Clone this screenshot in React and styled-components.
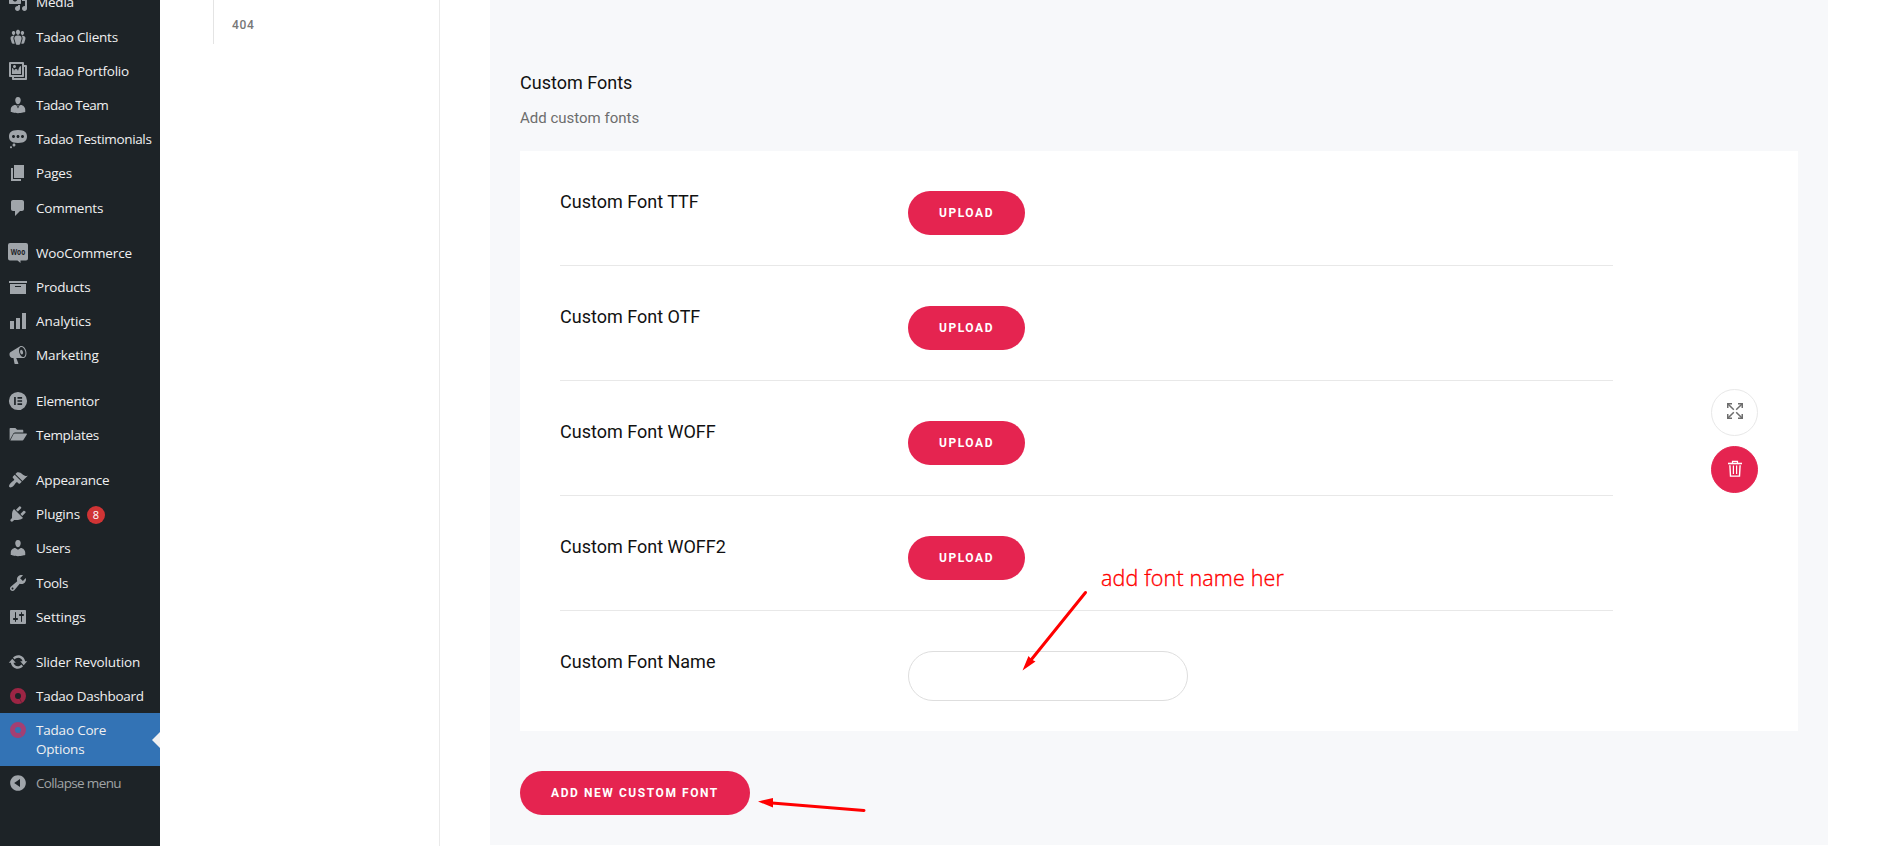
import styled, { createGlobalStyle } from "styled-components";

const GlobalStyle = createGlobalStyle`
    * {
        box-sizing: border-box;
    }
    body {
        margin: 0;
        background: #fff;
        overflow: hidden;
    }
`;

const Page = styled.div`
    position: relative;
    display: flex;
    width: 1877px;
    height: 846px;
    overflow: hidden;
    font-family: Roboto, "Liberation Sans", sans-serif;
`;

/* ---------- admin menu ---------- */

const Sidebar = styled.nav`
    flex: none;
    width: 160px;
    height: 846px;
    background: #1d2327;
    font-family: "Open Sans", "Noto Sans", sans-serif;
    overflow: hidden;
`;

const MenuList = styled.ul`
    list-style: none;
    margin: -14.7px 0 0;
    padding: 0;
`;

const MenuSeparator = styled.li`
    height: 11px;
`;

const MenuItem = styled.li`
    position: relative;
    display: flex;
    align-items: flex-start;
    min-height: 34.2px;
    background: ${({ $active }) => ($active ? "#3373b5" : "transparent")};
    color: ${({ $muted }) => ($muted ? "#a0a3a6" : "#f0f0f1")};
`;

const MenuIcon = styled.span`
    flex: none;
    display: flex;
    justify-content: center;
    width: 36px;
    padding-top: 7px;
    color: #a0a5aa;
    svg {
        display: block;
        width: 20px;
        height: 20px;
        fill: currentColor;
    }
`;

const MenuText = styled.span`
    display: flex;
    align-items: center;
    padding: 8px 0;
    font-size: 13.5px;
    line-height: 18.2px;
    letter-spacing: ${({ $spacing }) => $spacing || "-0.2px"};
    white-space: pre;
`;

const CountBadge = styled.span`
    width: 18px;
    height: 18px;
    margin: 1px 0 -1px 7px;
    border-radius: 9px;
    background: #d03435;
    color: #fff;
    font-size: 11px;
    line-height: 18px;
    letter-spacing: 0;
    text-align: center;
`;

const ActiveNotch = styled.span`
    position: absolute;
    right: 0;
    top: 50%;
    margin-top: -8px;
    border: 8px solid transparent;
    border-left-width: 0;
    border-right-color: #f0f0f1;
`;

/* ---------- theme options ---------- */

const SubNav = styled.aside`
    flex: none;
    width: 280px;
    padding-left: 53px;
    border-right: 1px solid #eaeaea;
`;

const SubNavItem = styled.div`
    height: 44px;
    padding: 17px 0 0 18px;
    border-left: 1px solid #e4e4e4;
    color: #777;
    font-size: 12px;
    font-weight: 500;
    line-height: 16px;
    letter-spacing: 0.7px;
`;

const Panel = styled.main`
    width: 1338px;
    height: 845px;
    margin-left: 50px;
    padding: 70px 30px 0;
    background: #f7f8fa;
`;

const PanelTitle = styled.h3`
    margin: 0;
    color: #111;
    font-size: 18px;
    font-weight: 400;
    line-height: 26px;
`;

const PanelHint = styled.p`
    margin: 10px 0 21px;
    color: #6d6d6d;
    font-size: 15px;
    line-height: 24px;
`;

const Card = styled.section`
    display: flex;
    align-items: center;
    justify-content: space-between;
    height: 580px;
    padding: 0 40px;
    background: #fff;
`;

const Fields = styled.div`
    width: 1053px;
`;

const Field = styled.div`
    display: flex;
    align-items: flex-start;
    height: 115px;
    padding-top: 40px;
    border-bottom: 1px solid #e8e8e8;
    &:last-child {
        height: 120px;
        border-bottom: none;
    }
`;

const FieldLabel = styled.label`
    width: 348px;
    color: #111;
    font-size: 18px;
    line-height: 22px;
`;

const Button = styled.button`
    display: block;
    width: ${({ $width }) => $width};
    height: 44px;
    margin: ${({ $top }) => $top || 0} 0 0;
    padding: 0;
    border: none;
    border-radius: 22px;
    background: #e52450;
    color: #fff;
    font-family: inherit;
    font-size: 12px;
    font-weight: 700;
    letter-spacing: 1.56px;
    line-height: 44px;
    text-align: center;
    text-transform: uppercase;
`;

const TextInput = styled.input`
    width: 280px;
    height: 50px;
    padding: 0 25px;
    border: 1px solid #dedede;
    border-radius: 25px;
    background: #fff;
    outline: none;
`;

const Actions = styled.div`
    display: flex;
    flex-direction: column;
    gap: 10px;
`;

const RoundButton = styled.button`
    display: flex;
    align-items: center;
    justify-content: center;
    width: 47px;
    height: 47px;
    padding: 0;
    border: 1px solid ${({ $filled }) => ($filled ? "#e52450" : "#e8e8e8")};
    border-radius: 50%;
    background: ${({ $filled }) => ($filled ? "#e52450" : "#fff")};
    color: ${({ $filled }) => ($filled ? "#fff" : "#6d6d6d")};
    svg {
        display: block;
        margin: ${({ $filled }) => ($filled ? "-1px 0 0 1px" : "-3px 0 0 1px")};
    }
`;

/* ---------- annotations over the page ---------- */

const Arrows = styled.svg`
    position: absolute;
    left: 0;
    top: 0;
    pointer-events: none;
`;

const Note = styled.span`
    position: absolute;
    left: 1101px;
    top: 563px;
    color: #f00;
    font-family: "Open Sans", sans-serif;
    font-size: 21.5px;
    font-weight: 300;
    line-height: 30px;
    letter-spacing: 0.15px;
    white-space: nowrap;
    -webkit-text-stroke: 0.35px #f00;
`;

const paths = {
    media: "M13 11V4c0-.55-.45-1-1-1h-1.67L9 1H5L3.67 3H2c-.55 0-1 .45-1 1v7c0 .55.45 1 1 1h10c.55 0 1-.45 1-1zM7 4.5c1.38 0 2.5 1.12 2.5 2.5S8.38 9.5 7 9.5 4.5 8.38 4.5 7 5.62 4.5 7 4.5zM14 6h5v10.5c0 1.38-1.12 2.5-2.5 2.5S14 17.88 14 16.5s1.12-2.5 2.5-2.5c.17 0 .34.02.5.05V9h-3V6zm-4 8.05V13h2v3.5c0 1.38-1.12 2.5-2.5 2.5S7 17.88 7 16.5 8.12 14 9.5 14c.17 0 .34.02.5.05z",
    groups: "M8.03 4.46c-.29 1.28.55 3.46 1.97 3.46 1.41 0 2.25-2.18 1.96-3.46-.22-.98-1.08-1.63-1.96-1.63-.89 0-1.74.65-1.97 1.63zm-4.13.9c-.25 1.08.47 2.93 1.67 2.93s1.92-1.85 1.67-2.93c-.19-.83-.92-1.39-1.67-1.39s-1.48.56-1.67 1.39zm8.86 0c-.25 1.08.47 2.93 1.66 2.93 1.2 0 1.92-1.85 1.67-2.93-.19-.83-.92-1.39-1.67-1.39-.74 0-1.47.56-1.66 1.39zm-.59 11.43l1.25-4.3C14.2 10 12.71 8.47 10 8.47c-2.72 0-4.21 1.53-3.44 4.02l1.26 4.3C8.05 17.51 9 18 10 18c.98 0 1.94-.49 2.17-1.21zm-6.1-7.63c-.49.67-.96 1.83-.42 3.59l1.12 3.79c-.34.2-.77.31-1.2.31-.85 0-1.65-.41-1.85-1.03l-1.07-3.65c-.65-2.11.61-3.4 2.92-3.4.27 0 .54.02.79.06-.1.1-.2.22-.29.33zm8.35-.39c2.31 0 3.58 1.29 2.92 3.4l-1.07 3.65c-.2.62-1 1.03-1.85 1.03-.43 0-.86-.11-1.2-.31l1.11-3.77c.55-1.78.08-2.94-.42-3.61-.08-.11-.18-.23-.28-.33.25-.04.51-.06.79-.06z",
    gallery: "M16 4h1.96c.57 0 1.04.47 1.04 1.04v12.92c0 .57-.47 1.04-1.04 1.04H5.04C4.47 19 4 18.53 4 17.96V16H2.04C1.47 16 1 15.53 1 14.96V2.04C1 1.47 1.47 1 2.04 1h12.92c.57 0 1.04.47 1.04 1.04V4zM3 14h11V3H3v11zm5-8.5C8 4.67 7.33 4 6.5 4S5 4.67 5 5.5 5.67 7 6.5 7 8 6.33 8 5.5zm2 4.5s1-5 3-5v8H4V7c2 0 2 3 2 3s.33-2 2-2 2 2 2 2zm7 7V6h-1v8.96c0 .57-.47 1.04-1.04 1.04H6v1h11z",
    businessman: "M10 9.25c-2.27 0-2.73-3.44-2.73-3.44C7 4.02 7.82 2 9.97 2c2.16 0 2.98 2.02 2.71 3.81 0 0-.41 3.44-2.68 3.44zM8.4 10.2L10 13.4l1.6-3.2 1.12-.2c2.39 0 4.52 2.33 4.52 4.53v2.49s-3.65 1.13-7.24 1.13c-3.65 0-7.24-1.13-7.24-1.13v-2.49c0-2.25 1.94-4.48 4.47-4.48zM9.3 10.3h1.4l-.35 1.3h-.7z",
    status: "M10 1c7 0 9 2.91 9 6.5S17 14 10 14s-9-2.91-9-6.5S3 1 10 1zM5.5 9C6.33 9 7 8.33 7 7.5S6.33 6 5.5 6 4 6.67 4 7.5 4.67 9 5.5 9zM10 9c.83 0 1.5-.67 1.5-1.5S10.83 6 10 6s-1.5.67-1.5 1.5S9.17 9 10 9zm4.5 0c.83 0 1.5-.67 1.5-1.5S15.33 6 14.5 6 13 6.67 13 7.5 13.67 9 14.5 9zM6 14.5c.83 0 1.5.67 1.5 1.5s-.67 1.5-1.5 1.5-1.5-.67-1.5-1.5.67-1.5 1.5-1.5zm-3 2.7c.55 0 1 .45 1 1s-.45 1-1 1-1-.45-1-1 .45-1 1-1z",
    page: "M6 15V2h10v13H6zm-1 1h8v2H3V5h2v11z",
    comments: "M5 2h9c1.1 0 2 .9 2 2v7c0 1.1-.9 2-2 2h-2l-5 5v-5H5c-1.1 0-2-.9-2-2V4c0-1.1.9-2 2-2z",
    archive: "M19 4v2H1V4h18zM2 7h16v10H2V7zm11 3V9H7v1h6z",
    chart: "M18 18V2h-4v16h4zm-6 0V7H8v11h4zm-6 0v-8H2v8h4z",
    megaphone: "M18.15 5.94c.46 1.62.38 3.22-.02 4.48-.42 1.28-1.26 2.18-2.3 2.48-.16.06-.26.06-.4.06-.06.02-.12.02-.18.02-.06.02-.14.02-.22.02h-6.8l2.22 5.5c.02.14-.06.26-.14.34-.08.1-.24.16-.34.16H6.95c-.1 0-.26-.06-.34-.16-.08-.08-.16-.2-.14-.34l-1-5.5H4.25l-.02-.02c-.5.06-1.08-.18-1.54-.62s-.88-1.08-1.06-1.88c-.24-.8-.2-1.56-.02-2.2.18-.62.58-1.08 1.06-1.3l.02-.02 9-5.4c.1-.06.18-.1.24-.16.06-.04.14-.08.24-.12.16-.08.28-.12.5-.18 1.04-.3 2.24.1 3.22.98s1.84 2.24 2.26 3.86zm-2.58 5.98h-.02c.4-.1.74-.34 1.04-.7.58-.7.86-1.76.86-3.04 0-.64-.1-1.3-.28-1.98-.34-1.36-1.02-2.5-1.78-3.24s-1.68-1.1-2.46-.88c-.82.22-1.4.96-1.7 2-.32 1.04-.28 2.36.06 3.72.38 1.36 1 2.5 1.8 3.24.78.74 1.62 1.1 2.48.88zm-2.54-7.08c.22-.04.42-.02.62.04.38.16.76.48 1.02 1s.42 1.2.42 1.78c0 .3-.04.56-.12.8-.18.48-.44.84-.86.94-.34.1-.8-.06-1.14-.4s-.64-.86-.78-1.5c-.18-.62-.12-1.24.02-1.72s.48-.84.82-.94z",
    elementor: "M10 .9a9.1 9.1 0 1 0 0 18.2A9.1 9.1 0 0 0 10 .9zM6.1 6.1h1.7v7.8H6.1V6.1zm3.4 0h4.6v1.6H9.5V6.1zm0 3.1h4.6v1.6H9.5V9.2zm0 3.1h4.6v1.6H9.5v-1.6z",
    folder: "M1.6 15.3V4c0-.6.4-1 1-1h4.8l1.7 1.8h5.2c.6 0 1 .4 1 1v1.7H7.2c-.8 0-1.5.4-1.9 1.1L1.6 15.3zM6.6 8.5h11.6c.6 0 .9.5.6 1l-3.3 5.3c-.2.4-.6.7-1.1.7H2.3l3.3-6.4c.2-.4.6-.6 1-.6z",
    appearance: "M14.48 11.06L7.41 3.99l1.5-1.5c.5-.56 2.3-.47 3.51.32 1.21.8 1.43 1.28 2.91 2.1 1.18.64 2.45 1.26 4.45.85zm-.71.71L6.7 4.7 4.93 6.47c-.39.39-.39 1.02 0 1.41l1.06 1.06c.39.39.39 1.03 0 1.42-.6.6-1.43 1.11-2.21 1.69-.35.26-.7.53-1.01.84C1.43 14.23.4 16.08 1.4 17.07c.99 1 2.84-.03 4.18-1.36.31-.31.58-.66.85-1.02.57-.78 1.08-1.61 1.69-2.21.39-.39 1.02-.39 1.41 0l1.06 1.06c.39.39 1.02.39 1.41 0z",
    plugins: "M13.11 4.36L9.87 7.6 8 5.73l3.24-3.24c.35-.34 1.05-.2 1.56.32.52.51.66 1.21.31 1.55zm-8 1.77l.91-1.12 9.01 9.01-1.19.84c-.71.71-2.63 1.16-3.82 1.16H6.14L4.9 17.26c-.59.59-1.54.59-2.12 0-.59-.58-.59-1.53 0-2.12l1.24-1.24v-3.88c0-1.13.4-3.19 1.09-3.89zm7.26 3.97l3.24-3.24c.34-.35 1.04-.21 1.55.31.52.51.66 1.21.31 1.55l-3.24 3.25z",
    users: "M10 9.25c-2.27 0-2.73-3.44-2.73-3.44C7 4.02 7.82 2 9.97 2c2.16 0 2.98 2.02 2.71 3.81 0 0-.41 3.44-2.68 3.44zm0 2.57L12.72 10c2.39 0 4.52 2.33 4.52 4.53v2.49s-3.65 1.13-7.24 1.13c-3.65 0-7.24-1.13-7.24-1.13v-2.49c0-2.25 1.94-4.48 4.47-4.48z",
    tools: "M16.68 9.77c-1.34 1.34-3.3 1.67-4.95.99l-5.41 6.52c-.99.99-2.59.99-3.58 0s-.99-2.59 0-3.57l6.52-5.42c-.68-1.65-.35-3.61.99-4.95 1.28-1.28 3.12-1.62 4.72-1.06l-2.89 2.89 2.82 2.82 2.86-2.87c.53 1.58.18 3.39-1.08 4.65zM3.81 16.21c.4.39 1.04.39 1.43 0 .4-.4.4-1.04 0-1.43-.39-.4-1.03-.4-1.43 0-.39.39-.39 1.03 0 1.43z",
    settings: "M18 16V4c0-.55-.45-1-1-1H3c-.55 0-1 .45-1 1v12c0 .55.45 1 1 1h14c.55 0 1-.45 1-1zM8 11h1c.55 0 1 .45 1 1s-.45 1-1 1H8v1.5c0 .28-.22.5-.5.5s-.5-.22-.5-.5V13H6c-.55 0-1-.45-1-1s.45-1 1-1h1V5.5c0-.28.22-.5.5-.5s.5.22.5.5V11zm5-2h-1c-.55 0-1-.45-1-1s.45-1 1-1h1V5.5c0-.28.22-.5.5-.5s.5.22.5.5V7h1c.55 0 1 .45 1 1s-.45 1-1 1h-1v5.5c0 .28-.22.5-.5.5s-.5-.22-.5-.5V9z",
    update: "M10.2 3.28c3.53 0 6.43 2.61 6.92 6h2.08l-3.5 4-3.5-4h2.32c-.45-1.97-2.21-3.45-4.32-3.45-1.45 0-2.73.71-3.54 1.78L4.95 5.66C6.23 4.2 8.11 3.28 10.2 3.28zm-.4 13.44c-3.52 0-6.43-2.61-6.92-6H.8l3.5-4c1.17 1.33 2.33 2.67 3.5 4H5.48c.45 1.97 2.21 3.45 4.32 3.45 1.45 0 2.73-.71 3.54-1.78l1.71 1.95c-1.28 1.46-3.15 2.38-5.25 2.38z",
    collapse: "M10 2.16c4.33 0 7.84 3.51 7.84 7.84s-3.51 7.84-7.84 7.84S2.16 14.33 2.16 10 5.67 2.16 10 2.16zm2 11.72V6.12L6.18 9.97z",
};

function WooIcon() {
    return (
        <svg viewBox="0 0 20 20">
            <path d="M2 0h16a2 2 0 0 1 2 2v13.5a2 2 0 0 1-2 2h-5.5v2.5l-3-2.5H2a2 2 0 0 1-2-2V2a2 2 0 0 1 2-2z" />
            <text
                x="10"
                y="11.5"
                textAnchor="middle"
                textLength="14.5"
                lengthAdjust="spacingAndGlyphs"
                fill="#1d2327"
                fontFamily="Open Sans"
                fontSize="8.5"
                fontWeight="700"
            >
                Woo
            </text>
        </svg>
    );
}

function TadaoIcon({ active }) {
    const ring = active ? "#a43f73" : "#9c2544";
    return (
        <svg viewBox="0 0 20 20">
            <circle cx="10" cy="10" r="5.5" fill="none" stroke={ring} strokeWidth="5" />
            <path d="M11.3 12l2.3 4.6" stroke={active ? "#3373b5" : "#1d2327"} strokeWidth="0.7" opacity="0.6" />
        </svg>
    );
}

function ExpandIcon() {
    return (
        <svg width="16" height="16" viewBox="0 0 16 16" fill="none" stroke="currentColor" strokeWidth="1.5">
            <path d="M.75 5V.75H5M11 .75h4.25V5M15.25 11v4.25H11M5 15.25H.75V11" />
            <path d="M1 1l5.8 5.8M15 1L9.2 6.8M15 15L9.2 9.2M1 15l5.8-5.8" />
        </svg>
    );
}

function TrashIcon() {
    return (
        <svg width="16" height="18" viewBox="0 0 16 18" fill="none" stroke="currentColor">
            <path d="M1 3.5h14" strokeWidth="1.6" />
            <path d="M5.5 3V1.4h5V3" strokeWidth="1.2" />
            <path d="M2.9 5.2l.6 10.9h9l.6-10.9" strokeWidth="1.4" />
            <path d="M6.4 5.5v8.5M9.6 5.5v8.5" strokeWidth="1.2" />
        </svg>
    );
}

const menu = [
    [
        { text: "Media", icon: "media" },
        { text: "Tadao Clients", icon: "groups", spacing: "-0.22px" },
        { text: "Tadao Portfolio", icon: "gallery", spacing: "-0.24px" },
        { text: "Tadao Team", icon: "businessman", spacing: "-0.5px" },
        { text: "Tadao Testimonials", icon: "status", spacing: "-0.34px" },
        { text: "Pages", icon: "page" },
        { text: "Comments", icon: "comments" },
    ],
    [
        { text: "WooCommerce", icon: "woo", spacing: "-0.14px" },
        { text: "Products", icon: "archive" },
        { text: "Analytics", icon: "chart", spacing: "-0.05px" },
        { text: "Marketing", icon: "megaphone", spacing: "-0.1px" },
    ],
    [
        { text: "Elementor", icon: "elementor", spacing: "-0.22px" },
        { text: "Templates", icon: "folder", spacing: "-0.3px" },
    ],
    [
        { text: "Appearance", icon: "appearance" },
        { text: "Plugins", icon: "plugins", count: 8 },
        { text: "Users", icon: "users", spacing: "-0.3px" },
        { text: "Tools", icon: "tools", spacing: "-0.3px" },
        { text: "Settings", icon: "settings", spacing: "-0.05px" },
    ],
    [
        { text: "Slider Revolution", icon: "update", spacing: "-0.12px" },
        { text: "Tadao Dashboard", icon: "tadao", spacing: "-0.28px" },
        { text: "Tadao Core\nOptions", icon: "tadao", active: true },
        { text: "Collapse menu", icon: "collapse", muted: true, spacing: "-0.65px" },
    ],
];

const uploads = ["Custom Font TTF", "Custom Font OTF", "Custom Font WOFF", "Custom Font WOFF2"];

function Icon({ name, active }) {
    if (name === "woo") return <WooIcon />;
    if (name === "tadao") return <TadaoIcon active={active} />;
    return (
        <svg viewBox="0 0 20 20">
            <path fillRule="evenodd" d={paths[name]} />
        </svg>
    );
}

function AdminMenu() {
    return (
        <Sidebar>
            <MenuList>
                {menu.map((group, i) => [
                    i > 0 && <MenuSeparator key={`sep-${i}`} />,
                    ...group.map(({ text, icon, active, muted, count, spacing }) => (
                        <MenuItem key={text} $active={active} $muted={muted}>
                            <MenuIcon>
                                <Icon name={icon} active={active} />
                            </MenuIcon>
                            <MenuText $spacing={spacing}>
                                {text}
                                {count && <CountBadge>{count}</CountBadge>}
                            </MenuText>
                            {active && <ActiveNotch />}
                        </MenuItem>
                    )),
                ])}
            </MenuList>
        </Sidebar>
    );
}

function App() {
    return (
        <Page>
            <GlobalStyle />
            <AdminMenu />
            <SubNav>
                <SubNavItem>404</SubNavItem>
            </SubNav>
            <Panel>
                <PanelTitle>Custom Fonts</PanelTitle>
                <PanelHint>Add custom fonts</PanelHint>
                <Card>
                    <Fields>
                        {uploads.map((label) => (
                            <Field key={label}>
                                <FieldLabel>{label}</FieldLabel>
                                <Button $width="117px">Upload</Button>
                            </Field>
                        ))}
                        <Field>
                            <FieldLabel htmlFor="font-name">Custom Font Name</FieldLabel>
                            <TextInput id="font-name" />
                        </Field>
                    </Fields>
                    <Actions>
                        <RoundButton aria-label="Move">
                            <ExpandIcon />
                        </RoundButton>
                        <RoundButton $filled aria-label="Delete">
                            <TrashIcon />
                        </RoundButton>
                    </Actions>
                </Card>
                <Button $width="230px" $top="40px">
                    Add new custom font
                </Button>
            </Panel>
            <Arrows width="1877" height="846" fill="#f00" stroke="#f00">
                <path d="M1085.5 592.5L1031 660" strokeWidth="3" strokeLinecap="round" />
                <path d="M1022.5 670.5l6-14.5 3 3.5 4 2z" stroke="none" />
                <path d="M864 810.5L772 803" strokeWidth="3" strokeLinecap="round" />
                <path d="M758 801.5l15-3.5v9.5z" stroke="none" />
            </Arrows>
            <Note>add font name her</Note>
        </Page>
    );
}

export default App;
